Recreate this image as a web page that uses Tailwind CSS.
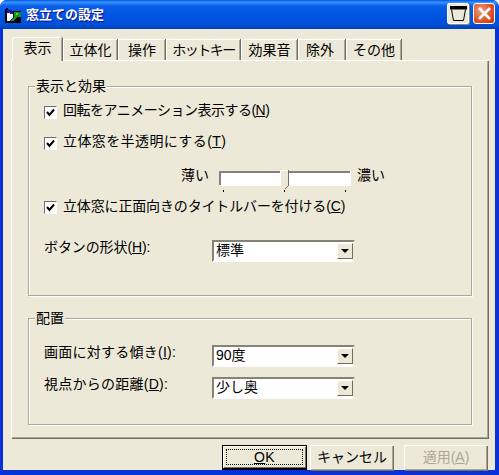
<!DOCTYPE html>
<html><head><meta charset="utf-8"><script src="https://cdn.jsdelivr.net/npm/@tailwindcss/browser@4"></script></head>
<body class="m-0 bg-white">
<div class="w-[499px] h-[475px] overflow-hidden rounded-t-[7px] flex flex-col bg-[#0831d9] text-[14px] leading-[20px] text-black [font-family:'Liberation_Sans','Noto_Sans_CJK_JP',sans-serif]">
  <div class="h-[29px] shrink-0 flex items-center pl-[5px] pr-[4px] bg-[linear-gradient(180deg,#0058e6_0%,#3a93ff_8%,#0a5fe8_20%,#0054e3_55%,#0050d8_85%,#0040b8_100%)]">
    <svg width="16" height="16" viewBox="0 0 16 16" class="shrink-0 mt-[1px]" shape-rendering="crispEdges">
      <rect x="0" y="2" width="2" height="14" fill="#000"/>
      <rect x="1" y="1" width="2" height="1" fill="#000"/>
      <rect x="8" y="4" width="8" height="12" fill="#000"/>
      <rect x="2" y="14" width="14" height="2" fill="#000"/>
      <polygon points="2,2 8,4 8,7 2,6" fill="#1c1ca8"/>
      <polygon points="2,6 8,7 8,10 4,14 2,14" fill="#fff"/>
      <rect x="9" y="5" width="7" height="5" fill="#0a9a1c"/>
      <rect x="11" y="6" width="2" height="2" fill="#5fd04a"/>
      <polygon points="9,10 12,10 8,14 5,14" fill="#0a9a1c"/>
    </svg>
    <span class="ml-[5px] font-bold text-[13px] text-white [text-shadow:1px_1px_0_#0f1089]">窓立ての設定</span>
    <div class="ml-auto flex gap-[4px] mb-[3px]">
      <div class="w-[22px] h-[21px] rounded-[2px] bg-[#ece9d8] border border-white flex items-center justify-center shadow-[1px_1px_0_#8a8a80]">
        <svg width="18" height="17" viewBox="0 0 18 17"><path d="M1 1H18V4.5H1Z" fill="#000"/><path d="M2.5 4.5L4.5 15.5H14.5L16.5 4.5" fill="none" stroke="#000"/></svg>
      </div>
      <div class="w-[22px] h-[21px] rounded-[3px] border border-white bg-[radial-gradient(circle_at_35%_35%,#eea080,#e0552a_55%,#c03510)] flex items-center justify-center">
        <svg width="15" height="15" viewBox="0 0 15 15"><path d="M2 2L13 13M13 2L2 13" stroke="#fff" stroke-width="2.6"/></svg>
      </div>
    </div>
  </div>
  <div class="ml-[3px] mr-[4px] h-[441px] bg-[#ece9d8] px-[8px] pt-[8px] flex flex-col">
    <div class="flex h-[23px] items-start pl-[1px] relative z-10">
      <div class="h-[24px] w-[50px] pb-[4px] flex items-center justify-center bg-[#ece9d8] border-t border-l border-white shadow-[inset_-1px_0_0_#aca899,1px_0_0_#716f64] rounded-t-[2px]">表示</div>
      <div class="mt-[2px] ml-[1px] h-[21px] w-[54px] pb-[1px] flex items-center justify-center border-t border-l border-white shadow-[inset_-1px_0_0_#aca899,1px_0_0_#716f64]">立体化</div>
      <div class="mt-[2px] ml-[1px] h-[21px] w-[47px] pb-[1px] flex items-center justify-center border-t border-l border-white shadow-[inset_-1px_0_0_#aca899,1px_0_0_#716f64]">操作</div>
      <div class="mt-[2px] ml-[1px] h-[21px] w-[74px] pb-[1px] flex items-center justify-center tracking-[-1.5px] border-t border-l border-white shadow-[inset_-1px_0_0_#aca899,1px_0_0_#716f64]">ホットキー</div>
      <div class="mt-[2px] ml-[1px] h-[21px] w-[56px] pb-[1px] flex items-center justify-center border-t border-l border-white shadow-[inset_-1px_0_0_#aca899,1px_0_0_#716f64]">効果音</div>
      <div class="mt-[2px] ml-[1px] h-[21px] w-[47px] pb-[1px] pr-[4px] flex items-center justify-center border-t border-l border-white shadow-[inset_-1px_0_0_#aca899,1px_0_0_#716f64]">除外</div>
      <div class="mt-[2px] ml-[1px] h-[21px] w-[55px] pb-[1px] flex items-center justify-center border-t border-l border-white shadow-[inset_-1px_0_0_#aca899,1px_0_0_#716f64]">その他</div>
    </div>
    <div class="h-[378px] w-[477px] border-t border-l border-white shadow-[inset_-1px_-1px_0_#aca899,1px_1px_0_#716f64] pl-[16px] pt-[25px]">
      <div class="relative w-[444px] h-[210px] border border-[#aca899] shadow-[1px_1px_0_#fff,inset_1px_1px_0_#fff] pl-[15px] pt-[15px]">
        <span class="absolute -top-[11px] left-[6px] px-[1px] bg-[#ece9d8]">表示と効果</span>
        <div class="flex items-center h-[20px] gap-[6px]">
          <span class="w-[13px] h-[13px] border border-t-[#716f64] border-l-[#716f64] border-r-white border-b-white bg-white shrink-0 flex items-center justify-center"><svg width="9" height="9" viewBox="0 0 9 9"><path d="M1 4L3.5 7L8 1.5" fill="none" stroke="#000" stroke-width="2"/></svg></span>
          <span class="pb-[4px] tracking-[-0.5px]">回転をアニメーション表示する(<u>N</u>)</span>
        </div>
        <div class="flex items-center h-[20px] gap-[6px] mt-[11px]">
          <span class="w-[13px] h-[13px] border border-t-[#716f64] border-l-[#716f64] border-r-white border-b-white bg-white shrink-0 flex items-center justify-center"><svg width="9" height="9" viewBox="0 0 9 9"><path d="M1 4L3.5 7L8 1.5" fill="none" stroke="#000" stroke-width="2"/></svg></span>
          <span class="pb-[4px] tracking-[0.4px]">立体窓を半透明にする(<u>T</u>)</span>
        </div>
        <div class="flex items-start h-[24px] mt-[16px] pl-[137px]">
          <span class="w-[38px] -mt-[4px]">薄い</span>
          <div class="relative w-[131px] h-[24px]">
            <div class="mt-[2px] h-[14px] bg-white border-t-2 border-l-2 border-t-[#858377] border-l-[#858377] shadow-[1px_1px_0_#fff]"></div>
            <div class="absolute left-[61px] top-[1px]">
              <svg width="9" height="20" viewBox="0 0 9 20" shape-rendering="crispEdges"><path d="M0 0H9V16L4.5 20L0 16Z" fill="#ece9d8"/><path d="M8 0H9V16H8ZM7 16H8V17H7ZM6 17H7V18H6ZM5 18H6V19H5Z" fill="#716f64"/><path d="M0 0H8V1H0ZM0 0H1V16H0Z" fill="#fff"/></svg>
            </div>
            <i class="absolute left-[4px] top-[21px] w-[1px] h-[2px] bg-black"></i>
            <i class="absolute left-[65px] top-[21px] w-[1px] h-[2px] bg-black"></i>
            <i class="absolute left-[126px] top-[21px] w-[1px] h-[2px] bg-black"></i>
          </div>
          <span class="ml-[7px] -mt-[4px]">濃い</span>
        </div>
        <div class="flex items-center h-[20px] gap-[6px] mt-[4px]">
          <span class="w-[13px] h-[13px] border border-t-[#716f64] border-l-[#716f64] border-r-white border-b-white bg-white shrink-0 flex items-center justify-center"><svg width="9" height="9" viewBox="0 0 9 9"><path d="M1 4L3.5 7L8 1.5" fill="none" stroke="#000" stroke-width="2"/></svg></span>
          <span class="pb-[2px] tracking-[-0.15px]">立体窓に正面向きのタイトルバーを付ける(<u>C</u>)</span>
        </div>
        <div class="flex items-center mt-[23px] h-[22px]">
          <span class="w-[168px] pb-[8px] tracking-[-0.1px]">ボタンの形状(<u>H</u>):</span>
          <div class="w-[143px] h-[22px] bg-white border-2 border-t-[#858377] border-l-[#858377] border-r-[#ece9d8] border-b-white flex items-center justify-between pl-[2px]">
            <span class="pb-[2px]">標準</span>
            <span class="w-[16px] h-[16px] bg-[#ece9d8] border border-t-white border-l-white border-r-[#716f64] border-b-[#716f64] flex items-center justify-center"><i class="block w-0 h-0 border-x-[4px] border-x-transparent border-t-[4px] border-t-black"></i></span>
          </div>
        </div>
      </div>
      <div class="relative mt-[22px] w-[444px] h-[107px] border border-[#aca899] shadow-[1px_1px_0_#fff,inset_1px_1px_0_#fff] pl-[15px] pt-[26px]">
        <span class="absolute -top-[11px] left-[6px] px-[1px] bg-[#ece9d8]">配置</span>
        <div class="flex items-center h-[22px]">
          <span class="w-[168px] pb-[8px] tracking-[0.25px]">画面に対する傾き(<u>I</u>):</span>
          <div class="w-[143px] h-[22px] bg-white border-2 border-t-[#858377] border-l-[#858377] border-r-[#ece9d8] border-b-white flex items-center justify-between pl-[2px]">
            <span class="pb-[2px]">90度</span>
            <span class="w-[16px] h-[16px] bg-[#ece9d8] border border-t-white border-l-white border-r-[#716f64] border-b-[#716f64] flex items-center justify-center"><i class="block w-0 h-0 border-x-[4px] border-x-transparent border-t-[4px] border-t-black"></i></span>
          </div>
        </div>
        <div class="flex items-center h-[22px] mt-[10px]">
          <span class="w-[168px] pb-[8px] tracking-[0.25px]">視点からの距離(<u>D</u>):</span>
          <div class="w-[143px] h-[22px] bg-white border-2 border-t-[#858377] border-l-[#858377] border-r-[#ece9d8] border-b-white flex items-center justify-between pl-[2px]">
            <span class="pb-[2px]">少し奥</span>
            <span class="w-[16px] h-[16px] bg-[#ece9d8] border border-t-white border-l-white border-r-[#716f64] border-b-[#716f64] flex items-center justify-center"><i class="block w-0 h-0 border-x-[4px] border-x-transparent border-t-[4px] border-t-black"></i></span>
          </div>
        </div>
      </div>
    </div>
    <div class="flex justify-end mt-[7px]">
      <button class="w-[85px] h-[25px] border border-black border-b-2 bg-[#ece9d8] shadow-[inset_1px_1px_0_#fff,inset_-1px_-1px_0_#716f64] flex items-center justify-center p-[3px]"><span class="w-full h-full border border-dotted border-black flex items-center justify-center pb-[1px]"><span class="tracking-[0.5px]"><u>O</u>K</span></span></button>
      <button class="ml-[3px] w-[83px] h-[25px] pb-[3px] bg-[#ece9d8] border-t border-l border-white shadow-[inset_-1px_-1px_0_#aca899,1px_1px_0_#716f64]">キャンセル</button>
      <button class="ml-[11px] w-[83px] h-[25px] pb-[3px] bg-[#ece9d8] text-[#aca899] border-t border-l border-white shadow-[inset_-1px_-1px_0_#aca899,1px_1px_0_#716f64]">適用(<u>A</u>)</button>
    </div>
  </div>
</div>
</body></html>
